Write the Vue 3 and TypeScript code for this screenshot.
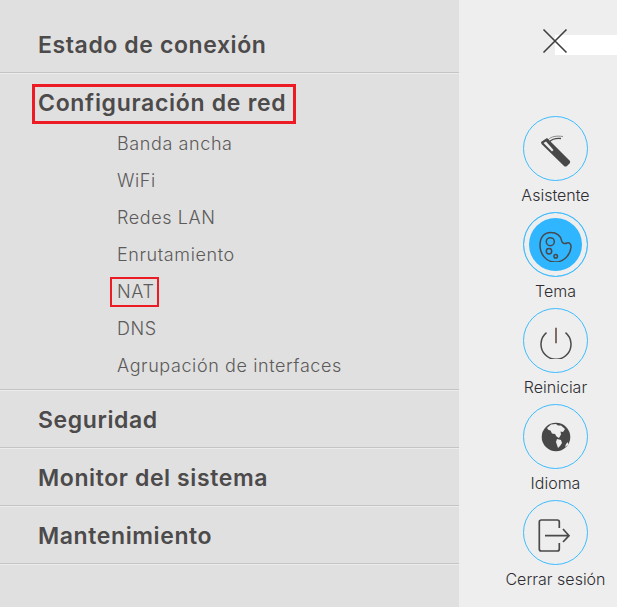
<script setup lang="ts">
interface Section {
  title: string
  marked?: boolean
  items?: string[]
}

const sections: Section[] = [
  { title: 'Estado de conexión' },
  {
    title: 'Configuración de red',
    marked: true,
    items: ['Banda ancha', 'WiFi', 'Redes LAN', 'Enrutamiento', 'NAT', 'DNS', 'Agrupación de interfaces'],
  },
  { title: 'Seguridad' },
  { title: 'Monitor del sistema' },
  { title: 'Mantenimiento' },
]

const actions = [
  { key: 'wizard', label: 'Asistente' },
  { key: 'theme', label: 'Tema' },
  { key: 'reboot', label: 'Reiniciar' },
  { key: 'lang', label: 'Idioma' },
  { key: 'logout', label: 'Cerrar sesión' },
]
</script>

<template>
  <div class="page">
    <nav class="menu">
      <section v-for="s in sections" :key="s.title" class="section">
        <div class="head" :class="{ open: s.items }">
          <span class="title" :class="{ marked: s.marked }">{{ s.title }}</span>
        </div>
        <ul v-if="s.items" class="items">
          <li v-for="item in s.items" :key="item">
            <span class="item" :class="{ 'item-marked': item === 'NAT' }">{{ item }}</span>
          </li>
        </ul>
      </section>
    </nav>

    <aside class="side">
      <div class="close-row">
        <svg class="close" width="26" height="26" viewBox="0 0 26 26">
          <path d="M1.5 1.5 L24.5 24.5 M24.5 1.5 L1.5 24.5" stroke="#3f3f3f" stroke-width="1.6" fill="none" />
        </svg>
      </div>
      <div class="white-bar"></div>

      <div class="actions">
        <div v-for="a in actions" :key="a.key" class="action">
          <div class="ring" :class="{ active: a.key === 'theme' }">
            <svg v-if="a.key === 'wizard'" width="34" height="36" viewBox="0 0 34 36">
              <path d="M10 9 C13 5.500 18 4.500 25 5.500" stroke="#8c8c8c" stroke-width="1" fill="none" />
              <path d="M11 11 C14 8 18 7 23 7.500" stroke="#4a4a4a" stroke-width="1.300" fill="none" />
              <path d="M3 11 L9 7 L32 30 Q32.500 31.500 31.500 32.500 L29 35 Q27.500 36 26 35 L3.500 13 Z" fill="#484848" />
              <path d="M5.500 12 L8 10.500 L15.500 19 L14 20.500 Z" fill="#eeeeee" />
            </svg>
            <svg v-else-if="a.key === 'theme'" width="34" height="34" viewBox="0 0 34 34" fill="none" stroke="#47494d" stroke-width="1.500">
              <path d="M11.500 4.500 C18 4.500 22 8 22.500 12.500 C23 15.500 26 16 28 15 C30.500 14.300 32.300 16 32 19.500 C31 28 24 34 16 34 C7 34 1 26 1 17 C1 9 5.500 4.500 11.500 4.500 Z" />
              <circle cx="11.300" cy="13.700" r="4" />
              <circle cx="10" cy="23.300" r="2.700" />
              <circle cx="16.700" cy="28.300" r="1.800" />
            </svg>
            <svg v-else-if="a.key === 'reboot'" width="32" height="36" viewBox="0 0 32 36" fill="none" stroke="#4a4a4a" stroke-width="1.500">
              <path d="M6.500 9.700 A15 15 0 1 0 25.500 9.700" />
              <path d="M16 4.700 V20.300" stroke="#5a4038" />
            </svg>
            <svg v-else-if="a.key === 'lang'" width="30" height="30" viewBox="0 0 30 30">
              <circle cx="15" cy="15" r="14.300" fill="#484848" />
              <path d="M6 6 L10 2.500 L15 2 L17 3.500 L20 3.500 L24 7 L22 10 L19.500 9.500 L20 12.500 L18 16 L15.500 14.500 L14 12 L11 11.500 L9.500 8.500 L7.500 8 Z" fill="#eeeeee" />
              <path d="M16 17 L20 18 L21 21 L19 24 L17 26 L16 23 L15 20 Z" fill="#eeeeee" />
              <path d="M25 22 L27 20 L27 23 L24 25 Z" fill="#eeeeee" />
            </svg>
            <svg v-else width="34" height="38" viewBox="0 0 34 38" fill="none" stroke="#4a4a4a" stroke-width="1.700">
              <path d="M21.300 14 V8 Q21.300 6 19.300 6 H3.300 Q1.300 6 1.300 8 V35 Q1.300 37 3.300 37 H19.300 Q21.300 37 21.300 35 V29" />
              <path d="M7 21.700 H31 M25 15 L31 21.700 L25 28" />
            </svg>
          </div>
          <span class="label">{{ a.label }}</span>
        </div>
      </div>
    </aside>
  </div>
</template>

<style scoped>
.page {
  display: flex;
  width: 617px;
  height: 607px;
  overflow: hidden;
  font-family: Inter, "Open Sans", sans-serif;
  background: #eeeeee;
}

.menu {
  width: 459px;
  height: 100%;
  padding-top: 15px;
  box-sizing: border-box;
  background: #e0e0e0;
}

.section {
  border-bottom: 1px solid #c4c4c4;
  box-shadow: 0 1px 0 #ececec;
}

.head {
  height: 57px;
  box-sizing: border-box;
  display: flex;
  align-items: center;
  padding: 2px 0 0 38px;
}

.head.open {
  height: 51px;
  align-items: flex-start;
  padding-top: 11px;
}

.title {
  font-size: 23px;
  font-weight: 600;
  letter-spacing: 0.6px;
  color: #4c4a4a;
  white-space: nowrap;
}

.title.marked {
  box-sizing: border-box;
  height: 40px;
  border: 3px solid #ed1c24;
  margin-left: -6px;
  padding: 0 7px 0 3px;
  line-height: 33px;
  letter-spacing: 0.7px;
}

.items {
  list-style: none;
  margin: 0;
  padding: 1px 0 5px 117px;
}

.items li {
  height: 37px;
  display: flex;
  align-items: center;
}

.item {
  font-size: 18px;
  font-weight: 300;
  letter-spacing: 0.6px;
  color: #5c5a5a;
  white-space: nowrap;
}

.item-marked {
  box-sizing: border-box;
  height: 30px;
  border: 2px solid #ed1c24;
  margin: 1px 0 0 -7px;
  padding: 0 2px 0 5px;
  line-height: 26px;
}

.side {
  position: relative;
  flex: 1;
  padding-left: 35px;
}

.close-row {
  display: flex;
  justify-content: center;
  padding-top: 28px;
  height: 88px;
}

.close {
  position: relative;
  z-index: 1;
  margin-right: 1px;
}

.white-bar {
  position: absolute;
  left: 96px;
  right: 0;
  top: 35px;
  height: 20px;
  background: #ffffff;
}

.actions {
  display: flex;
  flex-direction: column;
  align-items: center;
}

.action {
  height: 96px;
  display: flex;
  flex-direction: column;
  align-items: center;
}

.ring {
  width: 65px;
  height: 65px;
  box-sizing: border-box;
  border: 1px solid #3dbcff;
  border-radius: 50%;
  display: flex;
  align-items: center;
  justify-content: center;
  flex-shrink: 0;
}

.ring.active {
  background: #2fb6ff;
  box-shadow: inset 0 0 0 5px #eeeeee;
}

.label {
  margin-top: 4px;
  font-size: 16px;
  font-weight: 300;
  line-height: 20px;
  color: #2f2d33;
  white-space: nowrap;
}
</style>
